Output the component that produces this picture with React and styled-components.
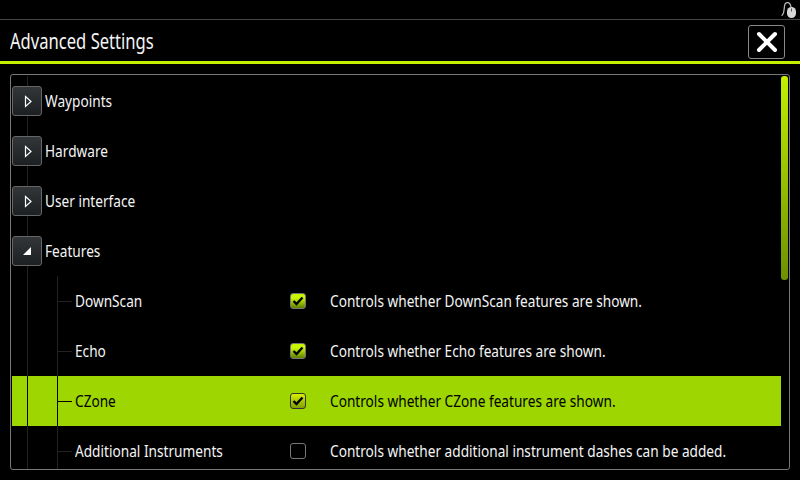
import React from "react";
import styled, { createGlobalStyle } from "styled-components";

const basics = [
  { label: "Waypoints" },
  { label: "Hardware" },
  { label: "User interface" },
];

const features = [
  { label: "DownScan", checked: true, text: "Controls whether DownScan features are shown." },
  { label: "Echo", checked: true, text: "Controls whether Echo features are shown." },
  { label: "CZone", checked: true, selected: true, text: "Controls whether CZone features are shown." },
  {
    label: "Additional Instruments",
    checked: false,
    text: "Controls whether additional instrument dashes can be added.",
  },
];

const MouseIcon = () => (
  <svg width="16" height="19" viewBox="0 0 16 19">
    <path d="M0.5 15.5 C3 15 3 10 3.5 6 C4 1.5 9 1 10 7" fill="none" stroke="#bbb" strokeWidth="1.2" />
    <rect x="6" y="7" width="9" height="11" rx="4.5" fill="#d8d8d8" />
    <rect x="10" y="8.5" width="1" height="3" fill="#555" />
  </svg>
);

const CloseIcon = () => (
  <svg width="22" height="22" viewBox="0 0 22 22">
    <path d="M3 3 L19 19 M19 3 L3 19" stroke="#fff" strokeWidth="4" strokeLinecap="round" />
  </svg>
);

const CheckIcon = () => (
  <svg width="12" height="10" viewBox="0 0 12 10">
    <path d="M1.5 5 L4.5 8 L10.5 1.5" fill="none" stroke="#000" strokeWidth="2.4" />
  </svg>
);

const ClosedArrow = () => (
  <svg width="10" height="13" viewBox="0 0 10 13">
    <path d="M3.5 1.5 L9 6.5 L3.5 11.5 Z" fill="none" stroke="#fff" strokeWidth="1.2" />
  </svg>
);

const OpenArrow = () => (
  <svg width="8" height="8" viewBox="0 0 8 8">
    <path d="M8 0 L8 8 L0 8 Z" fill="#fff" />
  </svg>
);

const App = () => {
  return (
    <>
      <GlobalStyle />
      <Page>
        <StatusBar>
          <MouseIcon />
        </StatusBar>
        <TitleBar>
          <Title>Advanced Settings</Title>
          <CloseButton>
            <CloseIcon />
          </CloseButton>
        </TitleBar>
        <Panel>
          <Scrollbar />
          {basics.map((item) => (
            <Row key={item.label}>
              <Expander>
                <ClosedArrow />
              </Expander>
              <Label>{item.label}</Label>
            </Row>
          ))}
          <Row>
            <Expander>
              <OpenArrow />
            </Expander>
            <Label>Features</Label>
          </Row>
          {features.map((item) => (
            <ChildRow key={item.label} $selected={item.selected}>
              <Tick $selected={item.selected} />
              <ChildLabel>{item.label}</ChildLabel>
              <Check $checked={item.checked} $selected={item.selected}>
                {item.checked && <CheckIcon />}
              </Check>
              <Description>{item.text}</Description>
            </ChildRow>
          ))}
        </Panel>
      </Page>
    </>
  );
};

export default App;

const GlobalStyle = createGlobalStyle`
  html, body {
    margin: 0;
    background: #000;
  }
`;

const Page = styled.div`
  width: 800px;
  height: 480px;
  overflow: hidden;
  display: flex;
  flex-direction: column;
  background: #000;
  color: #f4f4f4;
  font-family: "Noto Sans", sans-serif;
  font-size: 16px;
`;

const StatusBar = styled.div`
  height: 19px;
  display: flex;
  justify-content: flex-end;
  align-items: flex-start;
  padding: 0 3px 0 0;
  border-bottom: 1px solid #444;
`;

const TitleBar = styled.div`
  height: 38px;
  display: flex;
  align-items: center;
  justify-content: space-between;
  padding: 3px 15px 0 10px;
  border-bottom: 3px solid #c4f000;
`;

const Title = styled.div`
  margin-bottom: 2px;
  font-size: 21px;
  transform: scaleX(0.79);
  transform-origin: left center;
`;

const CloseButton = styled.div`
  width: 35px;
  height: 32px;
  display: flex;
  align-items: center;
  justify-content: center;
  border: 1px solid #888;
  border-radius: 3px;
`;

const Panel = styled.div`
  position: relative;
  margin: 10px 10px 0;
  height: 393px;
  padding: 1px 8px 0 1px;
  overflow: hidden;
  border: 1px solid #777;
  border-radius: 3px;
`;

const Scrollbar = styled.div`
  position: absolute;
  top: 1px;
  right: 1px;
  width: 7px;
  height: 204px;
  border-radius: 3px;
  background: linear-gradient(#c4f000, #6d9000);
`;

const Row = styled.div`
  flex-shrink: 0;
  height: 50px;
  display: flex;
  align-items: center;
  background: linear-gradient(#222, #222) 15px 0 / 1px 100% no-repeat;
`;

const Expander = styled.div`
  width: 28px;
  height: 28px;
  display: flex;
  align-items: center;
  justify-content: center;
  border: 1px solid #666;
  border-radius: 3px;
  background: linear-gradient(#333638, #1c2022);
`;

const NarrowText = styled.div`
  flex-shrink: 0;
  white-space: nowrap;
  transform: scaleX(0.853);
  transform-origin: left center;
`;

const Label = styled(NarrowText)`
  margin-left: 3px;
`;

const ChildRow = styled.div`
  height: 50px;
  display: flex;
  align-items: center;
  padding-left: 46px;
  color: ${(p) => (p.$selected ? "#000" : "#f4f4f4")};
  background-color: ${(p) => (p.$selected ? "#9dd600" : "transparent")};
  background-image: ${(p) =>
    p.$selected
      ? "linear-gradient(#000, #000), linear-gradient(#000, #000)"
      : "linear-gradient(#222, #222), linear-gradient(#222, #222)"};
  background-size: 1px 100%;
  background-position: 15px 0, 45px 0;
  background-repeat: no-repeat;
`;

const Tick = styled.div`
  flex-shrink: 0;
  width: 14px;
  height: 1px;
  background: ${(p) => (p.$selected ? "#000" : "#222")};
`;

const ChildLabel = styled(NarrowText)`
  width: 215px;
  margin-left: 3px;
`;

const Check = styled.div`
  flex-shrink: 0;
  width: 14px;
  height: 14px;
  display: flex;
  align-items: center;
  justify-content: center;
  border: 1px solid ${(p) => (p.$selected ? "#333" : "#777")};
  border-radius: 3px;
  background: ${(p) =>
    !p.$checked
      ? "transparent"
      : p.$selected
        ? "linear-gradient(#d8f000, #7f9f00)"
        : "linear-gradient(#c8f500 30%, #5f8000)"};
`;

const Description = styled(NarrowText)`
  margin-left: 24px;
`;
